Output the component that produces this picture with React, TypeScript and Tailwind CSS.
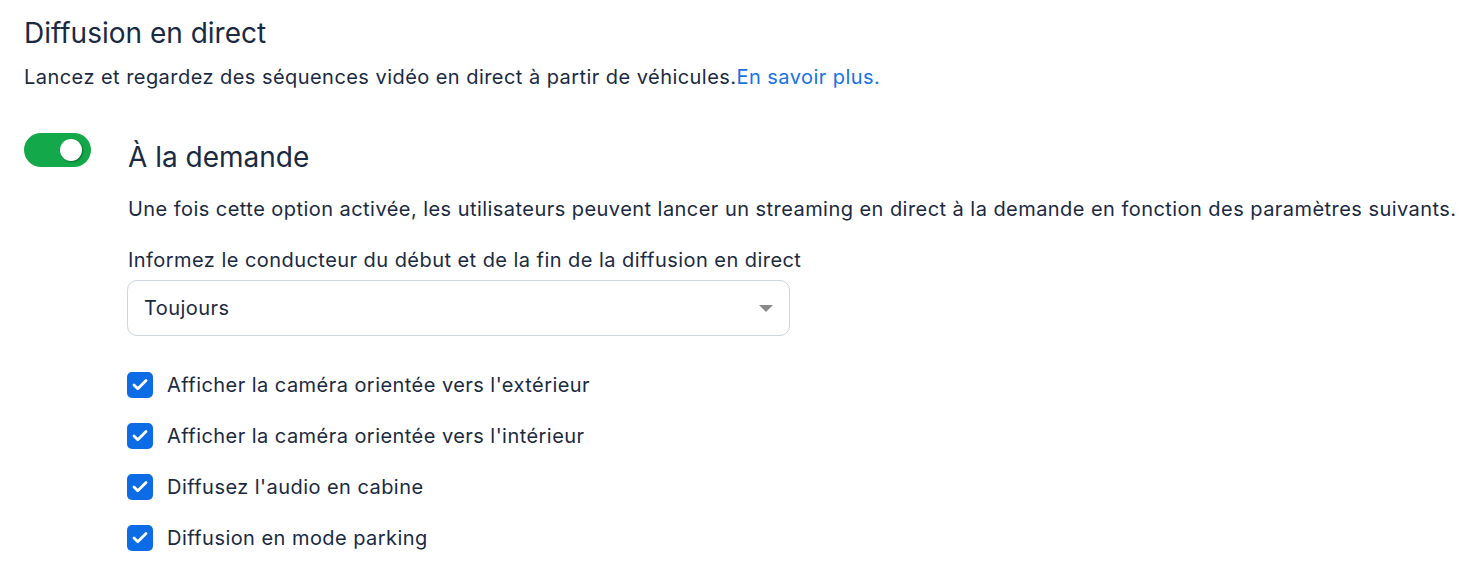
import { Check } from 'lucide-react';

const options = [
  "Afficher la caméra orientée vers l'extérieur",
  "Afficher la caméra orientée vers l'intérieur",
  "Diffusez l'audio en cabine",
  'Diffusion en mode parking',
];

export default function App() {
  return (
    <div className="min-h-screen bg-white px-6 pt-[14px] font-[Inter,sans-serif] text-[#1a2a42]">
      <h1 className="text-[28px] leading-[38px]">Diffusion en direct</h1>
      <p className="mt-[11px] text-[20px] leading-[28px] tracking-[0.45px]">
        Lancez et regardez des séquences vidéo en direct à partir de véhicules.
        <a href="#" className="text-[#1672e6]">
          En savoir plus.
        </a>
      </p>

      <div className="mt-[42px] flex">
        {/* interrupteur */}
        <div className="w-[104px] shrink-0">
          <div className="flex h-[34px] w-[67px] items-center justify-end rounded-full bg-[#13a84a] pr-[9px]">
            <div className="h-[22px] w-[22px] rounded-full bg-white shadow-[1px_1px_2px_rgba(0,0,0,0.35)]" />
          </div>
        </div>

        <div className="flex-1">
          <h2 className="text-[28px] leading-[48px]">À la demande</h2>
          <p className="mt-[14px] whitespace-nowrap text-[20px] leading-[28px] tracking-[0.45px]">
            Une fois cette option activée, les utilisateurs peuvent lancer un streaming en direct à la demande en fonction des paramètres suivants.
          </p>
          <p className="mt-[23px] text-[20px] leading-[28px] tracking-[0.45px]">
            Informez le conducteur du début et de la fin de la diffusion en direct
          </p>
          <div className="mt-[6px] -ml-px flex h-[56px] w-[663px] items-center justify-between rounded-[10px] border border-[#cdd5df] pl-[16px] pr-[16px] text-[20px] tracking-[0.45px]">
            <span>Toujours</span>
            <span className="h-0 w-0 border-x-[7px] border-t-[7px] border-x-transparent border-t-[#8a8a8a]" />
          </div>

          <div className="mt-[35px] flex flex-col gap-[23px]">
            {options.map((opt) => (
              <label key={opt} className="-ml-px flex items-center gap-[14px] text-[20px] leading-[28px] tracking-[0.45px]">
                <span className="flex h-[26px] w-[26px] items-center justify-center rounded-[5px] bg-[#0c6ce5]">
                  <Check className="h-[18px] w-[18px] text-white" strokeWidth={3.75} />
                </span>
                {opt}
              </label>
            ))}
          </div>
        </div>
      </div>
    </div>
  );
}
